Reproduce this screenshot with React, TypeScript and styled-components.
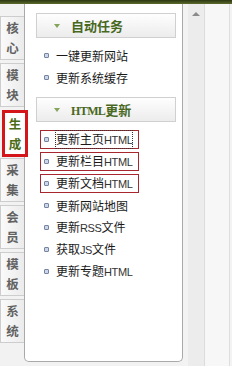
import React from "react";
import styled, { createGlobalStyle } from "styled-components";

const Global = createGlobalStyle`
  html, body { margin: 0; padding: 0; }
  body {
    width: 232px;
    height: 366px;
    overflow: hidden;
    background: #f2f2f2;
    font-family: "Liberation Sans", "Noto Sans CJK SC", sans-serif;
  }
`;

const Page = styled.div`
  width: 232px;
  height: 366px;
  display: flex;
  flex-direction: column;
  background: #f2f2f2;
`;

const TopBar = styled.div`
  height: 4px;
  flex: none;
  background: linear-gradient(to bottom, #2c3612, #5c6b2c);
`;

const Body = styled.div`
  display: flex;
  flex: 1;
  align-items: flex-start;
`;

const TabColumn = styled.div`
  width: 24px;
  flex: none;
  display: flex;
  flex-direction: column;
  gap: 3px;
  padding-top: 12px;
  position: relative;
  z-index: 2;
`;

const Tab = styled.div<{ $active?: boolean }>`
  box-sizing: border-box;
  height: ${(p) => (p.$active ? 47 : 44)}px;
  width: ${(p) => (p.$active ? 26 : 24)}px;
  margin: ${(p) => (p.$active ? "0 -4px -2px 2px" : "0")};
  border: ${(p) => (p.$active ? "3px solid #d4161b" : "1px solid #cdcdcd")};
  border-right: ${(p) => (p.$active ? "3px solid #d4161b" : "none")};
  background: ${(p) =>
    p.$active ? "#ffffff" : "linear-gradient(to right, #fafafa, #ebebeb)"};
  display: flex;
  flex-direction: column;
  align-items: center;
  justify-content: center;
  font-size: 12.5px;
  line-height: 20px;
  font-weight: bold;
  color: ${(p) => (p.$active ? "#4b6b16" : "#626262")};
  font-family: "Noto Sans CJK SC", sans-serif;
`;

const Panel = styled.div`
  box-sizing: border-box;
  width: 159px;
  height: 358px;
  flex: none;
  background: #ffffff;
  border: 1px solid #a9a9a9;
  border-top: none;
  border-radius: 0 0 5px 5px;
  padding: 9px 6px 0 11px;
  display: flex;
  flex-direction: column;
`;

const SectionHeader = styled.div`
  box-sizing: border-box;
  height: 25px;
  border: 1px solid #d0d0d0;
  background: linear-gradient(to bottom, #fefefe, #ececec);
  display: flex;
  align-items: center;
  padding-left: 17px;
  gap: 9px;
  color: #48681f;
  font-weight: bold;
  font-size: 13px;
  font-family: "Liberation Serif", "Noto Sans CJK SC", serif;
`;

const Arrow = styled.span`
  width: 0;
  height: 0;
  border-left: 3px solid transparent;
  border-right: 3px solid transparent;
  border-top: 4px solid #86a35a;
  margin-right: 2px;
`;

const HeaderText = styled.span`
  font-family: "Noto Sans CJK SC", sans-serif;
`;

const HeaderLatin = styled.span`
  font-family: "Liberation Serif", serif;
  font-size: 12px;
  letter-spacing: -0.6px;
`;

const List = styled.ul`
  list-style: none;
  margin: 0;
  padding: 8px 0 10px 4px;
  display: flex;
  flex-direction: column;
  align-items: flex-start;
  gap: 3px;
`;

const Item = styled.li<{ $boxed?: boolean }>`
  box-sizing: border-box;
  height: 19px;
  display: flex;
  align-items: center;
  padding: 0 6px 0 3px;
  border: 1px solid ${(p) => (p.$boxed ? "#a8262e" : "transparent")};
  font-size: 12px;
  color: #1a1a1a;
  font-family: "Noto Sans CJK SC", sans-serif;
`;

const Bullet = styled.span`
  box-sizing: border-box;
  width: 5px;
  height: 5px;
  flex: none;
  border: 1px solid #7584a3;
  background: #cdd6e8;
  border-radius: 1px;
  margin-right: 7px;
`;

const ItemText = styled.span<{ $focused?: boolean }>`
  line-height: 15px;
  outline: ${(p) => (p.$focused ? "1px dotted #333" : "none")};
  white-space: nowrap;
`;

const Latin = styled.span`
  font-family: "Liberation Sans", sans-serif;
  font-size: 11px;
  letter-spacing: -0.4px;
  color: #333;
`;

const RightArea = styled.div`
  flex: 1;
  height: 362px;
  display: flex;
  background: #f3f3f3;
`;

const Gutter = styled.div`
  width: 5px;
  flex: none;
`;

const ScrollColumn = styled.div`
  width: 17px;
  flex: none;
  background: #ececec;
  border-right: 1px solid #dcdcdc;
  display: flex;
  justify-content: center;
  padding-top: 8px;
  box-sizing: border-box;
`;

const UpArrow = styled.span`
  width: 0;
  height: 0;
  border-left: 4px solid transparent;
  border-right: 4px solid transparent;
  border-bottom: 4px solid #8a8a8a;
`;

const SideStrip = styled.div`
  width: 24px;
  flex: none;
  background: #f7f7f7;
  border-right: 1px solid #dedede;
`;

const tabs = [
  ["核", "心"],
  ["模", "块"],
  ["生", "成"],
  ["采", "集"],
  ["会", "员"],
  ["模", "板"],
  ["系", "统"],
];

type Entry = { zh: string; latin?: string; tail?: string; boxed?: boolean; focused?: boolean };

const auto: Entry[] = [{ zh: "一键更新网站" }, { zh: "更新系统缓存" }];

const html: Entry[] = [
  { zh: "更新主页", latin: "HTML", boxed: true, focused: true },
  { zh: "更新栏目", latin: "HTML", boxed: true },
  { zh: "更新文档", latin: "HTML", boxed: true },
  { zh: "更新网站地图" },
  { zh: "更新", latin: "RSS", tail: "文件" },
  { zh: "获取", latin: "JS", tail: "文件" },
  { zh: "更新专题", latin: "HTML" },
];

function Entries({ items }: { items: Entry[] }) {
  return (
    <List>
      {items.map((e, i) => (
        <Item key={i} $boxed={e.boxed}>
          <Bullet />
          <ItemText $focused={e.focused}>
            {e.zh}
            {e.latin && <Latin>{e.latin}</Latin>}
            {e.tail}
          </ItemText>
        </Item>
      ))}
    </List>
  );
}

export default function App() {
  return (
    <Page>
      <Global />
      <TopBar />
      <Body>
        <TabColumn>
          {tabs.map((t, i) => (
            <Tab key={i} $active={i === 2}>
              <span>{t[0]}</span>
              <span>{t[1]}</span>
            </Tab>
          ))}
        </TabColumn>
        <Panel>
          <SectionHeader>
            <Arrow />
            <HeaderText>自动任务</HeaderText>
          </SectionHeader>
          <Entries items={auto} />
          <SectionHeader>
            <Arrow />
            <HeaderText>
              <HeaderLatin>HTML</HeaderLatin>更新
            </HeaderText>
          </SectionHeader>
          <Entries items={html} />
        </Panel>
        <RightArea>
          <Gutter />
          <ScrollColumn>
            <UpArrow />
          </ScrollColumn>
          <SideStrip />
        </RightArea>
      </Body>
    </Page>
  );
}
